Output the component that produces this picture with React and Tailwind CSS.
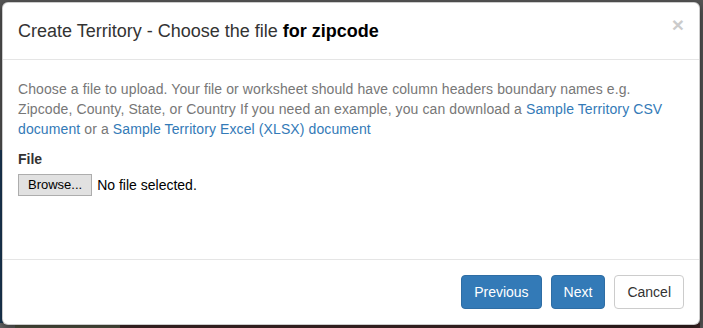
export default function App() {
  return (
    <div className="relative h-[328px] w-[703px] overflow-hidden bg-[#555] font-['Liberation_Sans',Arial,sans-serif] text-[14px] leading-[20px] text-[#333]">
      {/* page behind the backdrop */}
      <div className="absolute left-0 top-[150px] h-[178px] w-[3px] bg-[#1b3a58]" />
      <div className="absolute bottom-0 left-0 flex h-[5px] w-full">
        <div className="w-[15px] bg-[#666]" />
        <div className="w-[105px] bg-[#5a5c48]" />
        <div className="w-[380px] bg-[#4a2c2c]" />
        <div className="flex-1 bg-[#3e2626]" />
        <div className="w-[3px] bg-[#555]" />
      </div>

      <div className="relative ml-[2px] mt-[2px] w-[698px] rounded-[6px] border border-[rgba(0,0,0,0.2)] bg-white shadow-[0_3px_9px_rgba(0,0,0,0.5)]">
        <div className="flex items-start justify-between border-b border-[#e5e5e5] p-[15px]">
          <h4 className="text-[18px] leading-[26px] font-normal">
            Create Territory - Choose the file <b className="font-bold text-black">for zipcode</b>
          </h4>
          <button className="mt-[-6px] text-[21px] font-bold leading-[26px] text-black opacity-20">×</button>
        </div>

        <div className="h-[199px] px-[15px] pb-[15px] pt-[19px]">
          <p className="mb-[10px] tracking-[0.1px] text-[#777]">
            Choose a file to upload. Your file or worksheet should have column headers boundary names e.g.
            <br />
            Zipcode, County, State, or Country If you need an example, you can download a{' '}
            <a className="text-[#337ab7]">Sample Territory CSV</a>
            <br />
            <a className="text-[#337ab7]">document</a> or a{' '}
            <a className="text-[#337ab7]">Sample Territory Excel (XLSX) document</a>
          </p>
          <label className="mb-[5px] block font-bold">File</label>
          <div className="flex items-center gap-[5px]">
            <span className="border border-[#adadad] bg-[#e1e1e1] px-[9px] text-[13px] leading-[20px] text-black">Browse...</span>
            <span className="text-black">No file selected.</span>
          </div>
        </div>

        <div className="flex justify-end gap-[9px] border-t border-[#e5e5e5] p-[15px]">
          <button className="rounded-[4px] border border-[#2e6da4] bg-[#337ab7] px-[12px] py-[6px] text-white">Previous</button>
          <button className="rounded-[4px] border border-[#2e6da4] bg-[#337ab7] px-[12px] py-[6px] text-white">Next</button>
          <button className="rounded-[4px] border border-[#ccc] bg-white px-[12px] py-[6px] text-[#333]">Cancel</button>
        </div>
      </div>
    </div>
  )
}
